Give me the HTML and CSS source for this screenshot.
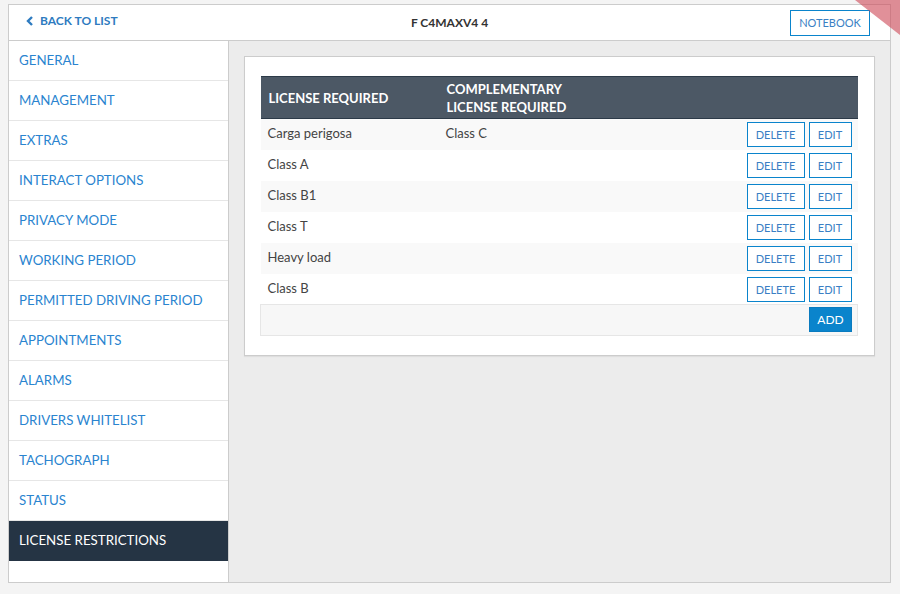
FILE: index.html
```html
<!DOCTYPE html>
<html>
<head>
<meta charset="utf-8">
<link rel="stylesheet" href="styles.css">
</head>
<body>
<div class="frame">
  <div class="topbar">
    <a class="back"><svg class="chev" width="8" height="10" viewBox="0 0 8 10"><path d="M6 1 L2 5 L6 9" fill="none" stroke="#2e7bc0" stroke-width="2.4"/></svg>BACK TO LIST</a>
    <div class="title">F C4MAXV4 4</div>
    <div class="right"><button class="notebook">NOTEBOOK</button></div>
  </div>
  <div class="content">
    <nav class="sidebar">
      <div class="item">GENERAL</div>
      <div class="item">MANAGEMENT</div>
      <div class="item">EXTRAS</div>
      <div class="item">INTERACT OPTIONS</div>
      <div class="item">PRIVACY MODE</div>
      <div class="item">WORKING PERIOD</div>
      <div class="item">PERMITTED DRIVING PERIOD</div>
      <div class="item">APPOINTMENTS</div>
      <div class="item">ALARMS</div>
      <div class="item">DRIVERS WHITELIST</div>
      <div class="item">TACHOGRAPH</div>
      <div class="item">STATUS</div>
      <div class="item active">LICENSE RESTRICTIONS</div>
    </nav>
    <main class="main">
      <div class="card">
        <table class="tbl">
          <thead>
            <tr><th class="c1">LICENSE REQUIRED</th><th class="c2">COMPLEMENTARY<br>LICENSE REQUIRED</th><th></th></tr>
          </thead>
          <tbody>
            <tr><td>Carga perigosa</td><td>Class C</td><td class="acts"><button class="btn del">DELETE</button><button class="btn edit">EDIT</button></td></tr>
            <tr><td>Class A</td><td></td><td class="acts"><button class="btn del">DELETE</button><button class="btn edit">EDIT</button></td></tr>
            <tr><td>Class B1</td><td></td><td class="acts"><button class="btn del">DELETE</button><button class="btn edit">EDIT</button></td></tr>
            <tr><td>Class T</td><td></td><td class="acts"><button class="btn del">DELETE</button><button class="btn edit">EDIT</button></td></tr>
            <tr><td>Heavy load</td><td></td><td class="acts"><button class="btn del">DELETE</button><button class="btn edit">EDIT</button></td></tr>
            <tr><td>Class B</td><td></td><td class="acts"><button class="btn del">DELETE</button><button class="btn edit">EDIT</button></td></tr>
          </tbody>
          <tfoot>
            <tr><td colspan="3" class="acts"><button class="btn add">ADD</button></td></tr>
          </tfoot>
        </table>
      </div>
    </main>
  </div>
</div>
<div class="ribbon"></div>
</body>
</html>
```
FILE: styles.css
```css
html, body { margin: 0; padding: 0; }
body {
  background: #f4f4f4;
  font-family: Lato, "Liberation Sans", sans-serif;
  width: 900px;
  height: 594px;
  overflow: hidden;
}
.frame {
  margin: 4px 0 0 8px;
  width: 883px;
  height: 579px;
  box-sizing: border-box;
  border: 1px solid #cccccc;
  display: flex;
  flex-direction: column;
  background: #fff;
}
.topbar {
  height: 35px;
  flex: none;
  border-bottom: 1px solid #cccccc;
  display: grid;
  grid-template-columns: 1fr auto 1fr;
  align-items: center;
}
.back {
  display: flex;
  align-items: center;
  padding-left: 17px;
  color: #2e7bc0;
  font-size: 12px;
  font-weight: 700;
  margin-top: -4px;
}
.chev { margin-right: 6px; }
.title {
  font-size: 12px;
  font-weight: 700;
  color: #333;
  margin-top: -1px;
}
.right { display: flex; justify-content: flex-end; padding-right: 20px; }
.notebook {
  font-family: inherit;
  font-size: 11px;
  color: #3a7fc4;
  background: #fff;
  border: 1px solid #0a84cc;
  height: 26px;
  width: 80px;
  padding: 0;
}
.content { flex: 1; display: flex; min-height: 0; }
.sidebar {
  width: 219px;
  flex: none;
  border-right: 1px solid #cccccc;
  background: #fff;
}
.item {
  height: 39px;
  border-bottom: 1px solid #e6e6e6;
  display: flex;
  align-items: center;
  padding-left: 10px;
  padding-bottom: 1px;
  box-sizing: border-box;
  height: 40px;
  font-size: 13.3px;
  color: #2a84cf;
}
.item.active {
  background: #253444;
  color: #fff;
  border-bottom-color: #253444;
}
.main {
  flex: 1;
  background: #ececec;
  padding: 15px;
}
.card {
  background: #fff;
  border: 1px solid #cccccc;
  box-shadow: 0 1px 1px rgba(0,0,0,0.06);
  padding: 19px 16px 19px 15px;
}
.tbl {
  width: 100%;
  border-collapse: collapse;
  font-size: 13px;
  color: #444;
}
.tbl thead tr {
  background: #4c5865;
  border-top: 1px solid #2c3a48;
  border-bottom: 1px solid #2c3a48;
}
.tbl th {
  height: 41px;
  text-align: left;
  color: #fff;
  font-weight: 700;
  font-size: 13px;
  line-height: 18px;
  padding: 0 7px 0 8px;
  vertical-align: middle;
}
.tbl th.c1 { width: 163px; }
.tbl th.c2 { width: 250px; }
.tbl tbody tr { height: 31px; }
.tbl tbody tr:nth-child(odd) { background: #f9f9f9; }
.tbl tbody tr:nth-child(even) { background: #fff; }
.tbl td {
  padding: 0 7px;
  vertical-align: top;
  line-height: 16px;
  padding-top: 6px;
}
.tbl td.acts {
  text-align: right;
  padding: 3px 6px 0 0;
  white-space: nowrap;
  font-size: 0;
}
.tbl tfoot tr {
  background: #f7f7f7;
  border: 1px solid #e6e6e6;
}
.tbl tfoot td.acts { padding: 2px 5px 2px 0; height: 26px; }
.btn {
  font-family: Lato, "Liberation Sans", sans-serif;
  font-size: 11px;
  height: 25px;
  background: #fff;
  border: 1px solid #0a84cc;
  color: #3a7fc4;
  padding: 0;
  margin-left: 4px;
  vertical-align: top;
}
.del { width: 58px; }
.edit { width: 43px; }
.add {
  width: 43px;
  background: #0a84cc;
  color: #fff;
  border-color: #0a7bbf;
  font-size: 12px;
}
.ribbon {
  position: absolute;
  top: 0;
  right: 0;
  width: 45px;
  height: 35px;
  background: rgba(205, 70, 85, 0.6);
  clip-path: polygon(0 0, 100% 0, 100% 100%);
}
```
